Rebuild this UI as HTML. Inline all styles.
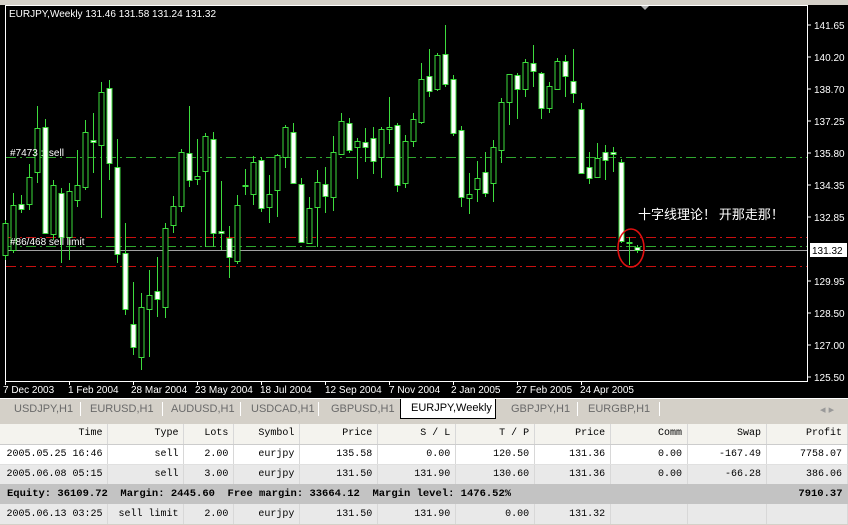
<!DOCTYPE html>
<html><head><meta charset="utf-8"><style>
*{margin:0;padding:0;box-sizing:border-box}
body{width:848px;height:525px;overflow:hidden;background:#d4d0c8;font-family:"Liberation Sans","Noto Sans CJK SC",sans-serif;position:relative}
#chart{position:absolute;left:0;top:0;width:848px;height:398px;background:#000}
.tabs{position:absolute;left:0;top:398px;width:848px;height:21px;background:#d4d0c8;border-top:1px solid #fff}
.tab{position:absolute;top:4px;font-size:11px;color:#6a6a6a}
.sep{position:absolute;top:3px;width:1px;height:14px;background:#999;border-right:1px solid #fff}
.act{position:absolute;left:400px;top:0;width:96px;height:20px;background:#fff;border:1px solid #000;border-top:none;font-size:11px;color:#000;padding:3px 0 0 10px}
table{position:absolute;left:0;top:424px;width:848px;border-collapse:collapse;font-family:"Liberation Mono","Noto Sans CJK SC",monospace;font-size:10px}
td{height:20px;text-align:right;padding-right:5px;border-right:1px solid #d8d8d8;white-space:nowrap;color:#000}
tr.h td{background:#f4f3ee;border-bottom:1px solid #ccc}
tr.w td{background:#fff;border-bottom:1px solid #e0e0e0}
tr.g td{background:#e9e9e9}
tr.e td{background:#c3c3c3;font-weight:bold;border:none;text-align:left;padding-left:7px;font-size:10.5px}
</style></head><body>
<svg id="chart" width="848" height="398" viewBox="0 0 848 398" xmlns="http://www.w3.org/2000/svg">
<rect x="0" y="0" width="848" height="5" fill="#d4d0c8"/>
<polygon points="640,5 650,5 645,10" fill="#b0b0b0"/>
<line x1="5.5" y1="6" x2="5.5" y2="381" stroke="#fff"/>
<line x1="5" y1="5.5" x2="808" y2="5.5" stroke="#fff"/>
<line x1="807.5" y1="6" x2="807.5" y2="381" stroke="#fff"/>
<line x1="5" y1="381.5" x2="808" y2="381.5" stroke="#fff"/>
<g id="lines">
<line x1="6" y1="157.5" x2="807" y2="157.5" stroke="#2fa82f" stroke-dasharray="10,4,2,4"/>
<line x1="6" y1="237.5" x2="807" y2="237.5" stroke="#c81010" stroke-dasharray="10,4,2,4"/>
<line x1="6" y1="246.5" x2="807" y2="246.5" stroke="#2fa82f" stroke-dasharray="10,4,2,4"/>
<line x1="6" y1="250.5" x2="807" y2="250.5" stroke="#a0a0a0"/>
<line x1="6" y1="266.5" x2="807" y2="266.5" stroke="#c81010" stroke-dasharray="10,4,2,4"/>
</g>
<g id="candles"></g>
<text x="9" y="17" fill="#fff" font-size="10" font-family="Liberation Sans,sans-serif">EURJPY,Weekly  131.46 131.58 131.24 131.32</text>
<text x="10" y="156" fill="#fff" font-size="10" font-family="Liberation Sans,sans-serif">#7473 :: sell</text>
<text x="10" y="245" fill="#fff" font-size="10" font-family="Liberation Sans,sans-serif">#86/468 sell limit</text>
<text x="638" y="219" fill="#fff" font-size="13" font-family="Noto Sans CJK SC,sans-serif">十字线理论！ 开那走那！</text>
<ellipse cx="631" cy="248" rx="13" ry="19" fill="none" stroke="#e01010" stroke-width="1.6"/>
<g font-size="10" fill="#fff" font-family="Liberation Sans,sans-serif">
<text x="814" y="29">141.65</text><text x="814" y="61">140.20</text><text x="814" y="93">138.70</text>
<text x="814" y="125">137.25</text><text x="814" y="157">135.80</text><text x="814" y="189">134.35</text>
<text x="814" y="221">132.85</text><text x="814" y="285">129.95</text><text x="814" y="317">128.50</text>
<text x="814" y="349">127.00</text><text x="814" y="381">125.50</text>
</g>
<g stroke="#fff"><line x1="808" y1="25" x2="811" y2="25"/><line x1="808" y1="57" x2="811" y2="57"/><line x1="808" y1="89" x2="811" y2="89"/><line x1="808" y1="121" x2="811" y2="121"/><line x1="808" y1="153" x2="811" y2="153"/><line x1="808" y1="185" x2="811" y2="185"/><line x1="808" y1="217" x2="811" y2="217"/><line x1="808" y1="281" x2="811" y2="281"/><line x1="808" y1="313" x2="811" y2="313"/><line x1="808" y1="345" x2="811" y2="345"/><line x1="808" y1="377" x2="811" y2="377"/></g>
<rect x="810" y="243" width="37" height="14" fill="#fff"/>
<text x="812" y="254" font-size="10" fill="#000" font-family="Liberation Sans,sans-serif">131.32</text>
<g font-size="10" fill="#fff" font-family="Liberation Sans,sans-serif">
<text x="3" y="393">7 Dec 2003</text><text x="68" y="393">1 Feb 2004</text><text x="131" y="393">28 Mar 2004</text>
<text x="195" y="393">23 May 2004</text><text x="260" y="393">18 Jul 2004</text><text x="325" y="393">12 Sep 2004</text>
<text x="389" y="393">7 Nov 2004</text><text x="451" y="393">2 Jan 2005</text><text x="516" y="393">27 Feb 2005</text>
<text x="580" y="393">24 Apr 2005</text>
</g>
<g stroke="#fff"><line x1="5.5" y1="381" x2="5.5" y2="385"/><line x1="69.5" y1="381" x2="69.5" y2="385"/><line x1="133.5" y1="381" x2="133.5" y2="385"/><line x1="197.5" y1="381" x2="197.5" y2="385"/><line x1="261.5" y1="381" x2="261.5" y2="385"/><line x1="325.5" y1="381" x2="325.5" y2="385"/><line x1="389.5" y1="381" x2="389.5" y2="385"/><line x1="453.5" y1="381" x2="453.5" y2="385"/><line x1="517.5" y1="381" x2="517.5" y2="385"/><line x1="581.5" y1="381" x2="581.5" y2="385"/></g>
</svg>
<div class="tabs">
<span class="tab" style="left:14px">USDJPY,H1</span><span class="sep" style="left:80px"></span>
<span class="tab" style="left:90px">EURUSD,H1</span><span class="sep" style="left:162px"></span>
<span class="tab" style="left:171px">AUDUSD,H1</span><span class="sep" style="left:240px"></span>
<span class="tab" style="left:251px">USDCAD,H1</span><span class="sep" style="left:318px"></span>
<span class="tab" style="left:331px">GBPUSD,H1</span>
<div class="act">EURJPY,Weekly</div>
<span class="tab" style="left:511px">GBPJPY,H1</span><span class="sep" style="left:577px"></span>
<span class="tab" style="left:588px">EURGBP,H1</span><span class="sep" style="left:659px"></span>
<span class="tab" style="left:820px;color:#999">◂ ▸</span>
</div>
<table>
<colgroup><col style="width:108px"><col style="width:76px"><col style="width:50px"><col style="width:66px"><col style="width:78px"><col style="width:78px"><col style="width:79px"><col style="width:76px"><col style="width:77px"><col style="width:79px"><col style="width:81px"></colgroup>
<tr class="h"><td>Time</td><td>Type</td><td>Lots</td><td>Symbol</td><td>Price</td><td>S / L</td><td>T / P</td><td>Price</td><td>Comm</td><td>Swap</td><td>Profit</td></tr>
<tr class="w"><td>2005.05.25 16:46</td><td>sell</td><td>2.00</td><td>eurjpy</td><td>135.58</td><td>0.00</td><td>120.50</td><td>131.36</td><td>0.00</td><td>-167.49</td><td>7758.07</td></tr>
<tr class="g"><td>2005.06.08 05:15</td><td>sell</td><td>3.00</td><td>eurjpy</td><td>131.50</td><td>131.90</td><td>130.60</td><td>131.36</td><td>0.00</td><td>-66.28</td><td>386.06</td></tr>
<tr class="e"><td colspan="10">Equity: 36109.72&nbsp; Margin: 2445.60&nbsp; Free margin: 33664.12&nbsp; Margin level: 1476.52%</td><td style="text-align:right;padding-right:5px">7910.37</td></tr>
<tr class="g"><td>2005.06.13 03:25</td><td>sell limit</td><td>2.00</td><td>eurjpy</td><td>131.50</td><td>131.90</td><td>0.00</td><td>131.32</td><td></td><td></td><td></td></tr>
</table>
<script>
var d=[[5,220,260,223,255,0],[13,193,253,205,250,0],[21,195,213,204,209,1],[29,164,210,177,204,0],[37,106,183,128,172,0],[45,119,233,127,233,1],[53,180,240,185,234,0],[61,188,263,193,237,1],[69,183,260,191,237,0],[77,150,207,185,200,0],[85,120,190,132,187,0],[93,113,173,140,142,1],[101,82,218,92,145,0],[109,80,180,88,163,1],[117,139,263,167,254,1],[125,223,315,253,309,1],[133,282,355,324,347,1],[141,293,370,307,357,0],[149,270,357,295,309,0],[157,257,317,291,299,1],[165,223,318,228,307,0],[173,196,233,206,225,0],[181,149,212,152,206,0],[189,106,187,153,180,1],[197,139,185,176,179,0],[205,133,247,136,171,0],[213,132,247,139,233,1],[221,181,250,231,233,1],[229,226,278,238,257,1],[237,195,264,205,261,0],[245,169,195,185,186,1],[253,156,205,162,194,0],[261,157,212,160,208,1],[269,175,223,194,207,0],[277,154,217,155,190,0],[285,125,168,127,157,0],[293,123,184,132,183,1],[301,178,242,184,242,1],[309,197,243,208,243,0],[317,170,247,182,207,0],[325,167,213,184,196,1],[333,136,211,152,197,0],[341,113,155,121,154,0],[349,118,153,123,150,1],[357,138,179,141,147,0],[365,128,162,142,147,1],[373,127,174,138,161,1],[381,127,178,129,157,0],[389,97,144,127,129,0],[397,123,192,125,185,1],[405,135,188,141,183,0],[413,113,147,119,141,0],[421,63,124,79,122,0],[429,49,97,76,91,1],[437,53,91,55,89,0],[445,25,87,54,84,1],[453,75,136,79,133,1],[461,126,207,130,197,1],[469,173,214,194,198,0],[477,161,202,178,189,0],[485,152,197,172,193,1],[493,140,202,147,183,0],[501,98,163,102,150,0],[509,74,125,74,102,0],[517,73,119,75,89,1],[525,59,97,62,89,0],[533,45,87,63,71,1],[541,72,119,73,108,1],[549,82,113,86,108,0],[557,58,90,61,89,0],[565,55,97,61,76,1],[573,49,103,81,93,1],[581,103,174,109,173,1],[589,152,184,167,178,1],[597,143,178,158,177,0],[605,145,180,152,160,1],[613,147,172,152,154,1],[621,159,243,162,241,1],[629,237,265,242,243,1],[637,245,253,247,250,1]];
var s='',G='#3ddc3d';
d.forEach(function(c){var x=c[0];
s+='<line x1="'+(x+.5)+'" y1="'+c[1]+'" x2="'+(x+.5)+'" y2="'+c[2]+'" stroke="'+G+'"/>';
var h=Math.max(c[4]-c[3],1);
s+='<rect x="'+(x-2)+'" y="'+(c[3]+.5)+'" width="5" height="'+h+'" fill="'+(c[5]?'#fff':'#000')+'" stroke="'+G+'"/>';});
document.getElementById('candles').innerHTML=s;
</script>
</body></html>
